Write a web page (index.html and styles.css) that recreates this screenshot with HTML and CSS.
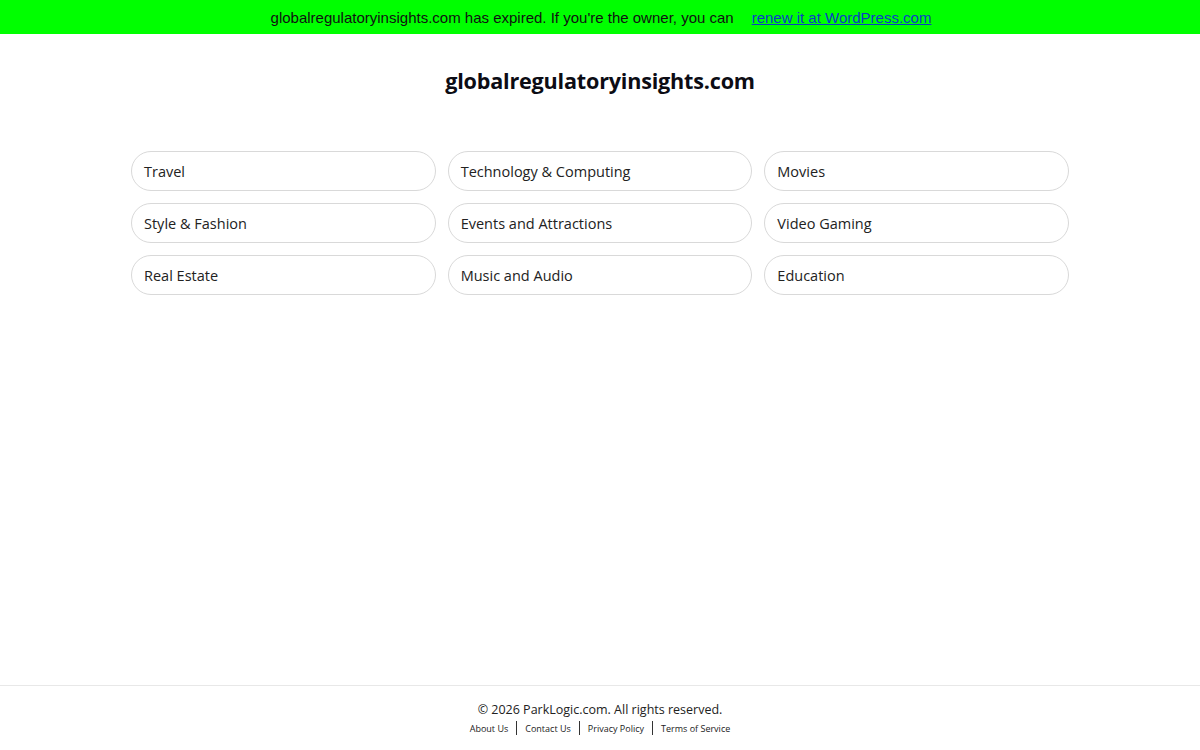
FILE: index.html
```html
<!DOCTYPE html>
<html lang="en">
<head>
    <meta charset="UTF-8">
    <meta name="viewport" content="width=device-width, initial-scale=1.0">
    <title>globalregulatoryinsights.com</title>
    <link rel="stylesheet" href="styles.css">
</head>
<body>
    <div class="page">
        <div class="expired-bar">
            <span>globalregulatoryinsights.com has expired. If you're the owner, you can</span>
            <a href="#">renew it at WordPress.com</a>
        </div>

        <h1 class="site-title">globalregulatoryinsights.com</h1>

        <div class="topics">
            <a class="topic" href="#">Travel</a>
            <a class="topic" href="#">Technology &amp; Computing</a>
            <a class="topic" href="#">Movies</a>
            <a class="topic" href="#">Style &amp; Fashion</a>
            <a class="topic" href="#">Events and Attractions</a>
            <a class="topic" href="#">Video Gaming</a>
            <a class="topic" href="#">Real Estate</a>
            <a class="topic" href="#">Music and Audio</a>
            <a class="topic" href="#">Education</a>
        </div>

        <footer class="footer">
            <div class="copy">&copy; 2026 ParkLogic.com. All rights reserved.</div>
            <div class="footer-links">
                <a href="#">About Us</a>
                <span class="sep"></span>
                <a href="#">Contact Us</a>
                <span class="sep"></span>
                <a href="#">Privacy Policy</a>
                <span class="sep"></span>
                <a href="#">Terms of Service</a>
            </div>
        </footer>
    </div>
</body>
</html>
```
FILE: styles.css
```css
html, body {
    margin: 0;
    padding: 0;
    background: #fff;
}

.page {
    min-height: 100vh;
    display: flex;
    flex-direction: column;
    font-family: "Open Sans", "Noto Sans", sans-serif;
    color: #111;
}

.expired-bar {
    height: 34px;
    background-color: #00ff00;
    display: flex;
    align-items: center;
    justify-content: center;
    gap: 18px;
    font-family: "Liberation Sans", Arial, sans-serif;
    font-size: 15px;
    color: #111;
    padding-left: 2px;
}

.expired-bar a {
    color: #0a3dc7;
    text-decoration: underline;
}

.site-title {
    margin: 32px 0 0;
    text-align: center;
    font-size: 21.6px;
    font-weight: 700;
    color: #0c0c14;
    letter-spacing: -0.2px;
    line-height: 30px;
}

.topics {
    width: 938px;
    margin: 55px auto 0;
    display: grid;
    grid-template-columns: repeat(3, 1fr);
    column-gap: 12px;
    row-gap: 12px;
}

.topic {
    display: flex;
    align-items: center;
    height: 38px;
    padding: 0 12px;
    border: 1px solid #d9d9d9;
    border-radius: 20px;
    font-size: 14.5px;
    color: #222;
    text-decoration: none;
}

.footer {
    margin-top: auto;
    border-top: 1px solid #e8e8e8;
    padding: 15px 0 15px;
    text-align: center;
}

.copy {
    font-size: 12.5px;
    color: #222;
    line-height: 18px;
}

.footer-links {
    display: flex;
    justify-content: center;
    align-items: center;
    gap: 8px;
    margin-top: 2px;
    font-size: 9px;
}

.footer-links a {
    color: #222;
    text-decoration: none;
}

.footer-links .sep {
    width: 1px;
    height: 14px;
    background: #333;
}
```
